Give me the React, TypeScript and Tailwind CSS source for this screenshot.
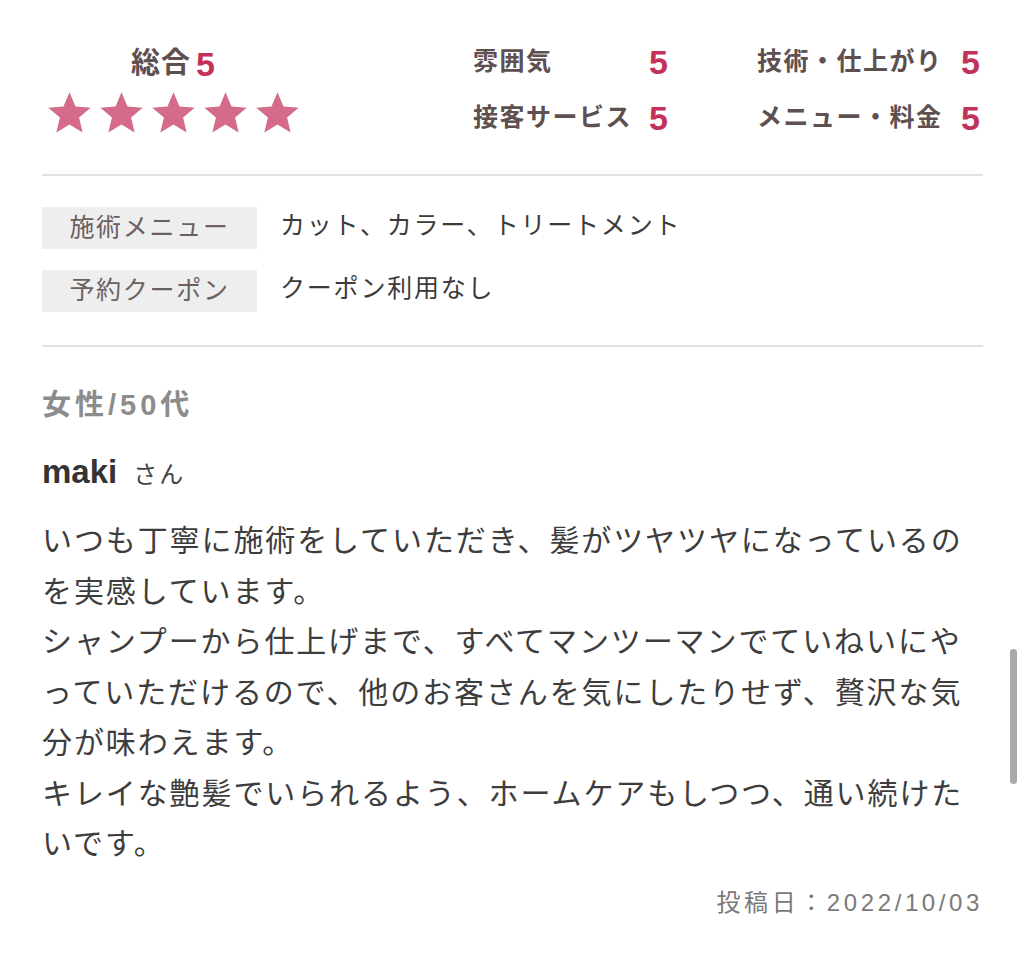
import React from "react";

const FONT = { fontFamily: '"Liberation Sans", "Noto Sans CJK JP", sans-serif' };

const SCORES = [
  { label: "雰囲気", value: 5 },
  { label: "技術・仕上がり", value: 5 },
  { label: "接客サービス", value: 5 },
  { label: "メニュー・料金", value: 5 },
];

const DETAILS = [
  { label: "施術メニュー", value: "カット、カラー、トリートメント" },
  { label: "予約クーポン", value: "クーポン利用なし" },
];

const BODY = [
  "いつも丁寧に施術をしていただき、髪がツヤツヤになっているのを実感しています。",
  "シャンプーから仕上げまで、すべてマンツーマンでていねいにやっていただけるので、他のお客さんを気にしたりせず、贅沢な気分が味わえます。",
  "キレイな艶髪でいられるよう、ホームケアもしつつ、通い続けたいです。",
];

function Star() {
  return (
    <svg viewBox="0 0 24 24" className="h-[47px] w-[47px]">
      <path
        d="M12 1.2l3.05 7.2 7.75.62-5.9 5.08 1.8 7.6L12 17.64 5.3 21.7l1.8-7.6-5.9-5.08 7.75-.62z"
        fill="#d46b89"
      />
    </svg>
  );
}

export default function App() {
  return (
    <div className="relative min-h-[954px] w-full bg-white" style={FONT}>
      <div className="px-[42px] pr-[41px]">
        {/* scores */}
        <div className="flex items-start pb-[28px] pt-[34px]">
          <div className="mt-[12px] flex w-[262px] flex-col items-center">
            <div className="flex h-[36px] items-center gap-[5px]">
              <span className="text-[29px] font-bold tracking-[1px] text-[#5e4f50]">総合</span>
              <span className="text-[34px] font-bold text-[#c2325b]">5</span>
            </div>
            <div className="mt-[8px] flex gap-[5px]">
              {[0, 1, 2, 3, 4].map((i) => (
                <Star key={i} />
              ))}
            </div>
          </div>
          <div className="ml-[169px] grid grid-cols-[195px_223px] gap-x-[89px]">
            {SCORES.map((s) => (
              <div key={s.label} className="flex h-[56px] items-center justify-between">
                <span className="text-[25px] font-bold tracking-[1.5px] text-[#5e4f50]">{s.label}</span>
                <span className="text-[34px] font-bold text-[#c2325b]">{s.value}</span>
              </div>
            ))}
          </div>
        </div>

        <div className="h-[2px] bg-[#e2e2e2]" />

        {/* menu / coupon */}
        <div className="flex flex-col gap-[21px] pb-[33px] pt-[31px]">
          {DETAILS.map((d) => (
            <div key={d.label} className="flex items-start gap-[23px]">
              <div className="flex h-[42px] w-[215px] items-center justify-center bg-[#eeeeee] text-[25px] tracking-[1.7px] text-[#6b5f5f]">
                {d.label}
              </div>
              <div className="text-[25px] leading-[36px] tracking-[1.8px] text-[#3e3a3a]">{d.value}</div>
            </div>
          ))}
        </div>

        <div className="h-[2px] bg-[#e2e2e2]" />

        {/* review */}
        <div className="pt-[38px]">
          <div className="text-[29px] font-bold leading-[40px] tracking-[4px] text-[#8c8c8c]">女性/50代</div>
          <div className="mt-[27px] flex items-baseline gap-[16px] leading-[40px]">
            <span className="text-[33px] font-bold text-[#333333]">maki</span>
            <span className="text-[24px] tracking-[2px] text-[#444444]">さん</span>
          </div>
          <div className="mt-[21px] text-[30px] leading-[50.5px] tracking-[1.9px] text-[#3d3d3d]">
            {BODY.map((p) => (
              <p key={p}>{p}</p>
            ))}
          </div>
          <div className="mt-[16px] text-right text-[24px] leading-[34px] tracking-[3.6px] text-[#7a7a7a]">
            投稿日：2022/10/03
          </div>
        </div>
      </div>

      {/* scroll indicator */}
      <div className="absolute right-[7px] top-[649px] h-[135px] w-[7px] rounded-full bg-[#a9a9a9]" />
    </div>
  );
}
